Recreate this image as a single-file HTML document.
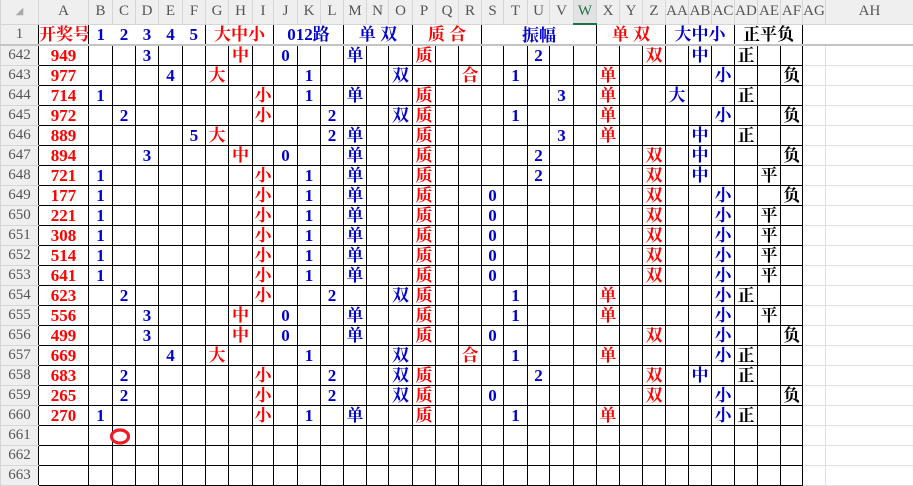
<!DOCTYPE html>
<html><head><meta charset="utf-8"><style>
body{margin:0;width:913px;height:479px;overflow:hidden;background:#fff;position:relative}
table{border-collapse:collapse;table-layout:fixed;position:absolute;top:0;left:0;width:913px}
td,th{padding:0;overflow:hidden;white-space:nowrap;text-align:center}
tr.h th{height:23px;background:#efefef;border:1px solid #d6d6d6;border-top:none;font:15px "Liberation Serif","DejaVu Serif",serif;color:#555;font-weight:normal}
tr.h th.sel{color:#1e7145;border-bottom:2px solid #217346;background:#e2e2e2}
tbody th{background:#efefef;border:1px solid #d6d6d6;border-right:none;font:15px "Liberation Serif",serif;color:#555;font-weight:normal;text-align:center}
td{border:1px solid #000;font:bold 17px "Liberation Serif","Noto Serif CJK SC",serif;height:19px;line-height:19px}
td.g{border:1px solid #e1e1e1}
tr.one td{border:none;height:20px;font-size:17px}
tr.one td.bl{border-left:1px solid #000}
tr.d td:nth-child(2),tr.d td:nth-child(n+8):nth-child(-n+10),tr.d td:nth-child(n+17):nth-child(-n+19),tr.d td:nth-child(n+25):nth-child(-n+27){color:#f00}
tr.d td:nth-child(n+3):nth-child(-n+7),tr.d td:nth-child(n+11):nth-child(-n+16),tr.d td:nth-child(n+20):nth-child(-n+24),tr.d td:nth-child(n+28):nth-child(-n+30){color:#0000cc}
tr.d td:nth-child(n+31){color:#000}
.r{color:#f00}.b{color:#0000cc}.k{color:#000}
#fz{position:absolute;left:0;top:44px;width:913px;height:2px;background:#c4c4c4}
</style></head><body>
<table>
<colgroup><col style="width:38px"><col style="width:50px"><col style="width:24px"><col style="width:23px"><col style="width:23px"><col style="width:24px"><col style="width:23px"><col style="width:23px"><col style="width:24px"><col style="width:21px"><col style="width:24px"><col style="width:23px"><col style="width:23px"><col style="width:23px"><col style="width:22px"><col style="width:24px"><col style="width:23px"><col style="width:23px"><col style="width:23px"><col style="width:22px"><col style="width:24px"><col style="width:22px"><col style="width:24px"><col style="width:23px"><col style="width:23px"><col style="width:23px"><col style="width:23px"><col style="width:23px"><col style="width:23px"><col style="width:23px"><col style="width:23px"><col style="width:23px"><col style="width:22px"><col style="width:23px"><col style="width:88px"></colgroup>
<tr class="h"><th style="color:#aaa;font-size:10px">◢</th><th>A</th><th>B</th><th>C</th><th>D</th><th>E</th><th>F</th><th>G</th><th>H</th><th>I</th><th>J</th><th>K</th><th>L</th><th>M</th><th>N</th><th>O</th><th>P</th><th>Q</th><th>R</th><th>S</th><th>T</th><th>U</th><th>V</th><th class="sel">W</th><th>X</th><th>Y</th><th>Z</th><th>AA</th><th>AB</th><th>AC</th><th>AD</th><th>AE</th><th>AF</th><th>AG</th><th>AH</th></tr>
<tr class="one"><th>1</th><td class="r bl">开奖号</td><td class="b bl">1</td><td class="b">2</td><td class="b">3</td><td class="b">4</td><td class="b">5</td><td class="r bl" colspan="3">大中小</td><td class="b bl" colspan="3">012路</td><td class="b bl" colspan="3">单 双</td><td class="r bl" colspan="3">质 合</td><td class="b bl" colspan="5">振幅</td><td class="r bl" colspan="3">单 双</td><td class="b bl" colspan="3">大中小</td><td class="k bl" colspan="3">正平负</td><td class="bl"></td><td></td></tr>
<tr class="d"><th>642</th><td>949<td><td><td>3<td><td><td><td>中<td><td>0<td><td><td>单<td><td><td>质<td><td><td><td><td>2<td><td><td><td><td>双<td><td>中<td><td>正<td><td><td class="g"><td class="g"></tr>
<tr class="d"><th>643</th><td>977<td><td><td><td>4<td><td>大<td><td><td><td>1<td><td><td><td>双<td><td><td>合<td><td>1<td><td><td><td>单<td><td><td><td><td>小<td><td><td>负<td class="g"><td class="g"></tr>
<tr class="d"><th>644</th><td>714<td>1<td><td><td><td><td><td><td>小<td><td>1<td><td>单<td><td><td>质<td><td><td><td><td><td>3<td><td>单<td><td><td>大<td><td><td>正<td><td><td class="g"><td class="g"></tr>
<tr class="d"><th>645</th><td>972<td><td>2<td><td><td><td><td><td>小<td><td><td>2<td><td><td>双<td>质<td><td><td><td>1<td><td><td><td>单<td><td><td><td><td>小<td><td><td>负<td class="g"><td class="g"></tr>
<tr class="d"><th>646</th><td>889<td><td><td><td><td>5<td>大<td><td><td><td><td>2<td>单<td><td><td>质<td><td><td><td><td><td>3<td><td>单<td><td><td><td>中<td><td>正<td><td><td class="g"><td class="g"></tr>
<tr class="d"><th>647</th><td>894<td><td><td>3<td><td><td><td>中<td><td>0<td><td><td>单<td><td><td>质<td><td><td><td><td>2<td><td><td><td><td>双<td><td>中<td><td><td><td>负<td class="g"><td class="g"></tr>
<tr class="d"><th>648</th><td>721<td>1<td><td><td><td><td><td><td>小<td><td>1<td><td>单<td><td><td>质<td><td><td><td><td>2<td><td><td><td><td>双<td><td>中<td><td><td>平<td><td class="g"><td class="g"></tr>
<tr class="d"><th>649</th><td>177<td>1<td><td><td><td><td><td><td>小<td><td>1<td><td>单<td><td><td>质<td><td><td>0<td><td><td><td><td><td><td>双<td><td><td>小<td><td><td>负<td class="g"><td class="g"></tr>
<tr class="d"><th>650</th><td>221<td>1<td><td><td><td><td><td><td>小<td><td>1<td><td>单<td><td><td>质<td><td><td>0<td><td><td><td><td><td><td>双<td><td><td>小<td><td>平<td><td class="g"><td class="g"></tr>
<tr class="d"><th>651</th><td>308<td>1<td><td><td><td><td><td><td>小<td><td>1<td><td>单<td><td><td>质<td><td><td>0<td><td><td><td><td><td><td>双<td><td><td>小<td><td>平<td><td class="g"><td class="g"></tr>
<tr class="d"><th>652</th><td>514<td>1<td><td><td><td><td><td><td>小<td><td>1<td><td>单<td><td><td>质<td><td><td>0<td><td><td><td><td><td><td>双<td><td><td>小<td><td>平<td><td class="g"><td class="g"></tr>
<tr class="d"><th>653</th><td>641<td>1<td><td><td><td><td><td><td>小<td><td>1<td><td>单<td><td><td>质<td><td><td>0<td><td><td><td><td><td><td>双<td><td><td>小<td><td>平<td><td class="g"><td class="g"></tr>
<tr class="d"><th>654</th><td>623<td><td>2<td><td><td><td><td><td>小<td><td><td>2<td><td><td>双<td>质<td><td><td><td>1<td><td><td><td>单<td><td><td><td><td>小<td>正<td><td><td class="g"><td class="g"></tr>
<tr class="d"><th>655</th><td>556<td><td><td>3<td><td><td><td>中<td><td>0<td><td><td>单<td><td><td>质<td><td><td><td>1<td><td><td><td>单<td><td><td><td><td>小<td><td>平<td><td class="g"><td class="g"></tr>
<tr class="d"><th>656</th><td>499<td><td><td>3<td><td><td><td>中<td><td>0<td><td><td>单<td><td><td>质<td><td><td>0<td><td><td><td><td><td><td>双<td><td><td>小<td><td><td>负<td class="g"><td class="g"></tr>
<tr class="d"><th>657</th><td>669<td><td><td><td>4<td><td>大<td><td><td><td>1<td><td><td><td>双<td><td><td>合<td><td>1<td><td><td><td>单<td><td><td><td><td>小<td>正<td><td><td class="g"><td class="g"></tr>
<tr class="d"><th>658</th><td>683<td><td>2<td><td><td><td><td><td>小<td><td><td>2<td><td><td>双<td>质<td><td><td><td><td>2<td><td><td><td><td>双<td><td>中<td><td>正<td><td><td class="g"><td class="g"></tr>
<tr class="d"><th>659</th><td>265<td><td>2<td><td><td><td><td><td>小<td><td><td>2<td><td><td>双<td>质<td><td><td>0<td><td><td><td><td><td><td>双<td><td><td>小<td><td><td>负<td class="g"><td class="g"></tr>
<tr class="d"><th>660</th><td>270<td>1<td><td><td><td><td><td><td>小<td><td>1<td><td>单<td><td><td>质<td><td><td><td>1<td><td><td><td>单<td><td><td><td><td>小<td>正<td><td><td class="g"><td class="g"></tr>
<tr class="d"><th>661</th><td><td><td><td><td><td><td><td><td><td><td><td><td><td><td><td><td><td><td><td><td><td><td><td><td><td><td><td><td><td><td><td><td class="g"><td class="g"></tr>
<tr class="d"><th>662</th><td><td><td><td><td><td><td><td><td><td><td><td><td><td><td><td><td><td><td><td><td><td><td><td><td><td><td><td><td><td><td><td><td class="g"><td class="g"></tr>
<tr class="d"><th>663</th><td><td><td><td><td><td><td><td><td><td><td><td><td><td><td><td><td><td><td><td><td><td><td><td><td><td><td><td><td><td><td><td><td class="g"><td class="g"></tr>
</table>
<div id="fz"></div>
<svg style="position:absolute;left:0;top:0" width="913" height="479"><ellipse cx="120" cy="436.5" rx="8.5" ry="6.5" fill="none" stroke="#ee1c24" stroke-width="3.2"/></svg>
</body></html>
